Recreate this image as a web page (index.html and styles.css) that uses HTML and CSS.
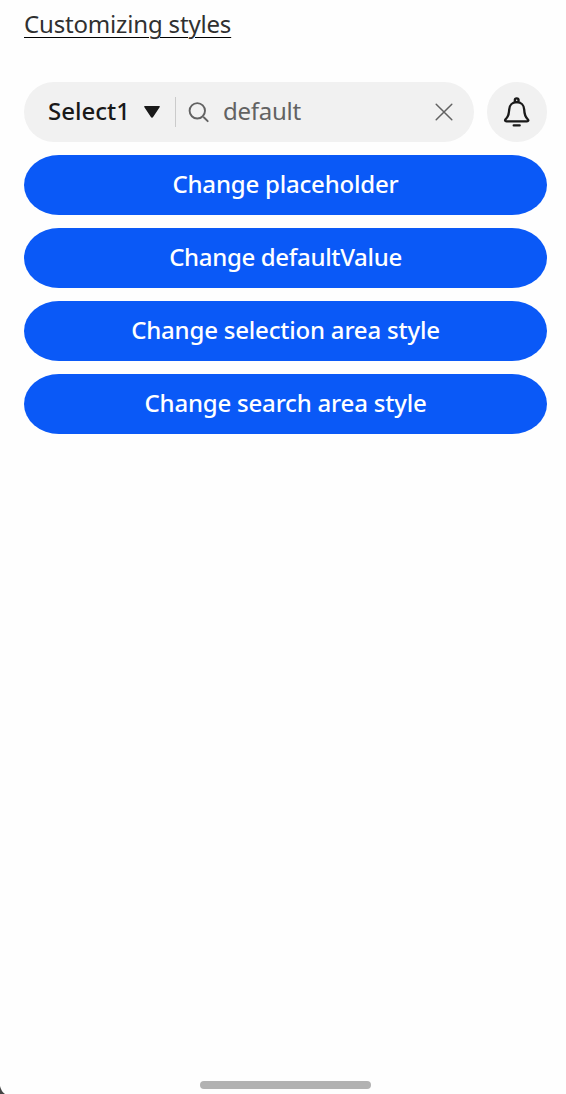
FILE: index.html
```html
<!DOCTYPE html>
<html lang="en">
<head>
<meta charset="utf-8">
<title>Customizing styles</title>
<link rel="stylesheet" href="styles.css">
</head>
<body>
<main class="screen">
  <h1 class="title"><span class="title-text">Customizing styles</span></h1>
  <div class="toolbar">
    <div class="search-bar">
      <span class="select-label">Select1</span>
      <svg class="arrow" width="18" height="14" viewBox="0 0 18 14"><path d="M2 1h14q1.500 0 .6 1.300L10.300 11.800q-1.300 1.800-2.600 0L1.400 2.300Q.5 1 2 1z" fill="#191919"/></svg>
      <span class="divider"></span>
      <svg class="magnifier" width="22" height="22" viewBox="0 0 22 22" fill="none" stroke="#626262" stroke-width="1.900" stroke-linecap="round"><circle cx="9.300" cy="9.800" r="7.700"/><path d="M16 16.500l3.700 3.700"/></svg>
      <span class="query">default</span>
      <svg class="clear" width="18" height="18" viewBox="0 0 18 18" fill="none" stroke="#626262" stroke-width="1.500" stroke-linecap="round"><path d="M1.200 1.200l15.600 15.600M16.800 1.200L1.200 16.800"/></svg>
    </div>
    <button class="bell-button" aria-label="Notifications">
      <svg width="28" height="32" viewBox="0 0 28 32" fill="none" stroke="#191919" stroke-width="2.300" stroke-linecap="round" stroke-linejoin="round"><circle cx="13.700" cy="4.200" r="1.900"/><path d="M13.700 6.200c-4.400 0-7.300 3.100-7.500 7.400-.2 5.200-1 7.200-3.500 9.600-1.100 1.100-.7 2.200.7 2.200H24c1.400 0 1.800-1.100.7-2.200-2.500-2.400-3.300-4.400-3.500-9.600-.2-4.300-3.100-7.400-7.500-7.400zM10.700 29.400h6"/></svg>
    </button>
  </div>
  <div class="actions">
    <button class="action placeholder">Change placeholder</button>
    <button class="action value">Change defaultValue</button>
    <button class="action selection">Change selection area style</button>
    <button class="action search">Change search area style</button>
  </div>
</main>
<div class="home-indicator"></div>
<svg class="corner" width="6" height="9" viewBox="0 0 6 9"><path d="M0 1Q1 6 5 9H0z" fill="#444"/></svg>
</body>
</html>
```
FILE: styles.css
```css
* { box-sizing: border-box; }
body {
  margin: 0;
  height: 1094px;
  display: flex;
  flex-direction: column;
  justify-content: space-between;
  align-items: center;
  overflow: hidden;
  background: #fefefe;
  color: #191919;
  font-family: "Noto Sans", "Open Sans", sans-serif;
  font-size: 24px;
}
.screen { width: 100%; padding: 7px 19px 0 24px; }
.title {
  margin: 0;
  height: 75px;
  font-size: 24px;
  font-weight: 400;
  line-height: 34px;
  letter-spacing: -0.17px;
  color: #303030;
}
.title-text {
  text-decoration: underline;
  text-decoration-color: #000;
  text-decoration-thickness: 1px;
  text-underline-offset: 4px;
}
.toolbar { display: flex; justify-content: space-between; height: 60px; }
.search-bar {
  display: flex;
  align-items: center;
  width: 450px;
  padding: 0 21px 0 24px;
  border-radius: 30px;
  background: #f1f1f1;
}
.select-label { width: 95px; padding-bottom: 2px; font-weight: 500; line-height: 58px; }
.arrow { margin-right: 14px; }
.divider { width: 1px; height: 30px; margin-right: 12px; background: #cbcbcb; }
.magnifier { margin-right: 13px; }
.query { padding-bottom: 2px; color: #626262; line-height: 58px; letter-spacing: -0.25px; }
.clear { margin-left: auto; }
.bell-button {
  display: flex;
  align-items: center;
  justify-content: center;
  width: 60.5px;
  height: 60px;
  padding: 0;
  border: 0;
  border-radius: 50%;
  background: #f1f1f1;
}
.actions { display: flex; flex-direction: column; gap: 13px; margin-top: 13px; }
.action {
  height: 60px;
  padding: 0 0 2px;
  border: 0;
  border-radius: 35px / 30px;
  background: #0a59f7;
  color: #fff;
  font: 500 24px/58px "Noto Sans", "Open Sans", sans-serif;
  letter-spacing: -0.2px;
}
.value { letter-spacing: -0.33px; }
.home-indicator {
  width: 171px;
  height: 8px;
  margin: 0 0 5px 5px;
  border-radius: 4px;
  background: #b2b2b2;
}
.corner { position: absolute; left: 0; bottom: 0; }
```
